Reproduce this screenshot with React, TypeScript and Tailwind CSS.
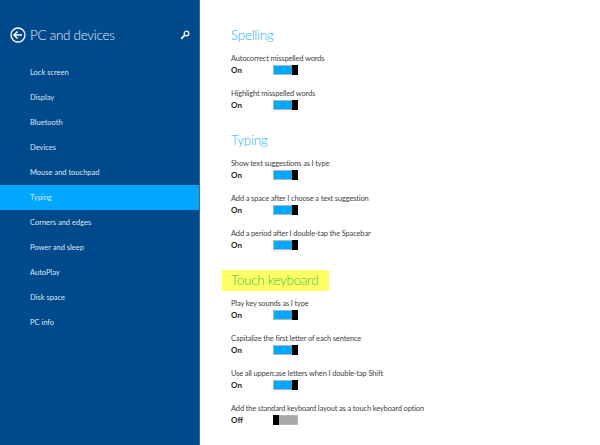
import React from "react";

const nav = ["Lock screen","Display","Bluetooth","Devices","Mouse and touchpad","Typing","Corners and edges","Power and sleep","AutoPlay","Disk space","PC info"];

function Toggle({ on }: { on: boolean }) {
  return (
    <div className={`flex h-[10px] w-[25px] items-stretch border border-[#b5b5b5] ${on ? "flex-row bg-[#00a8f8]" : "flex-row-reverse bg-[#a8a8a8]"}`}>
      <div className="flex-1" />
      <div className={`-my-px w-[6px] bg-black ${on ? "-mr-px" : "-ml-px"}`} />
    </div>
  );
}

function Setting({ label, on = true }: { label: string; on?: boolean }) {
  return (
    <div className="flex h-[35px] flex-col">
      <div className="h-[12px] whitespace-nowrap pt-px text-[7.5px] leading-[12px] tracking-[-0.15px] text-[#444]">{label}</div>
      <div className="flex h-[12px] items-center">
        <div className="w-[42px] text-[8px] font-bold leading-[12px] text-[#222]">{on ? "On" : "Off"}</div>
        <Toggle on={on} />
      </div>
    </div>
  );
}

function Heading({ children }: { children: React.ReactNode }) {
  return <div className="h-[35px] whitespace-nowrap pt-[8px] text-[13.5px] font-light leading-[21px] tracking-[-0.3px] text-[#2cb0f5]">{children}</div>;
}

export default function App() {
  return (
    <div className="flex h-[445px] w-[600px] overflow-hidden bg-white font-['Lato','Open_Sans',sans-serif]">
      <aside className="flex w-[200px] shrink-0 flex-col border-r border-[#2f6fae] bg-[#004a8c] text-white">
        <div className="flex h-[60px] items-center pl-[10px] pr-[9px] pt-[10px]">
          <svg width="16" height="16" viewBox="0 0 16 16" fill="none" stroke="white" className="shrink-0">
            <circle cx="8" cy="8" r="7" strokeWidth="1.3" />
            <path d="M4 8h8M7.5 4.5 4 8l3.5 3.5" strokeWidth="1.6" />
          </svg>
          <div className="ml-[4px] flex-1 whitespace-nowrap text-[13.5px] font-light tracking-[-0.3px] text-[#e0ebf5]">PC and devices</div>
          <svg width="10" height="10" viewBox="0 0 10 10" fill="none" stroke="white">
            <circle cx="6.5" cy="3.5" r="2.3" strokeWidth="1.3" />
            <path d="M4.8 5.2 1.2 8.8" strokeWidth="1.8" />
          </svg>
        </div>
        {nav.map((n) => (
          <div key={n} className={`flex h-[25px] items-center pl-[30px] text-[7.5px] text-[#dbe7f3] ${n === "Typing" ? "bg-[#00a6ff]" : ""}`}>{n}</div>
        ))}
      </aside>
      <main className="flex-1 pl-[31px] pt-[17px]">
        <Heading>Spelling</Heading>
        <Setting label="Autocorrect misspelled words" />
        <Setting label="Highlight misspelled words" />
        <Heading>Typing</Heading>
        <Setting label="Show text suggestions as I type" />
        <Setting label="Add a space after I choose a text suggestion" />
        <Setting label="Add a period after I double-tap the Spacebar" />
        <div className="h-[35px] pt-[8px]">
          <div className="-ml-[9px] flex h-[21px] w-[107px] items-center whitespace-nowrap bg-[#ffff66] pl-[9px] text-[13.5px] font-light tracking-[-0.3px] text-[#3fc24f]">Touch keyboard</div>
        </div>
        <Setting label="Play key sounds as I type" />
        <Setting label="Capitalize the first letter of each sentence" />
        <Setting label="Use all uppercase letters when I double-tap Shift" />
        <Setting label="Add the standard keyboard layout as a touch keyboard option" on={false} />
      </main>
    </div>
  );
}
